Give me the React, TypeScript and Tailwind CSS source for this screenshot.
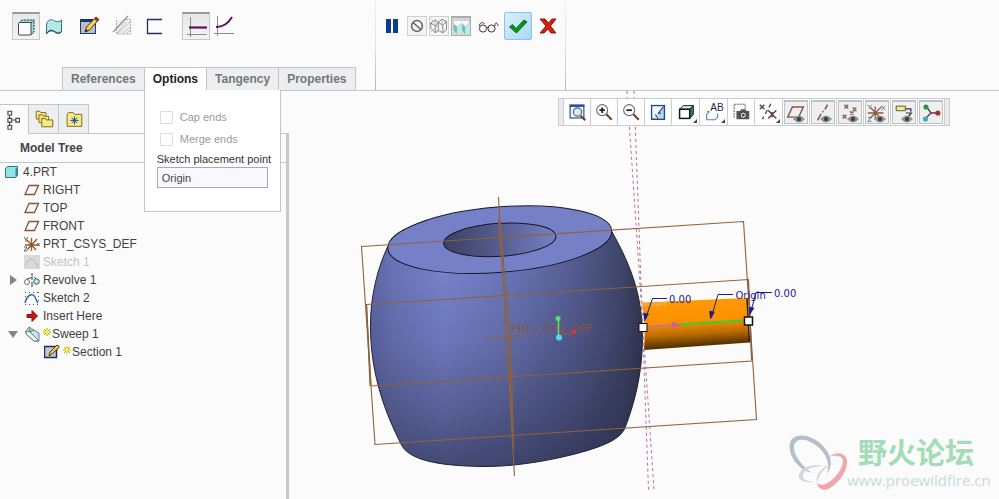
import React, { useState } from "react";

type IconProps = { name: string; size?: number };

// All icons share a 24x24 grid, except the 16x16 tree ones further down
const icons: Record<string, React.ReactNode> = {
  solid: (
    <>
      <path d="M5 8l3-3h12v12l-3 3z" fill="#9fdcd8" />
      <path d="M5 8l3-3h12v12l-3 3M17 8l3-3" fill="none" stroke="#17303a" strokeDasharray="2 1" />
      <rect x="4.500" y="7.500" width="12.500" height="12.500" rx="1" fill="#fdfdfd" stroke="#444" />
    </>
  ),
  surface: (
    <>
      <path d="M4.500 10c2-5 5-5 8-3 3 1 5 1 7-1v12c-3 2-5 2-7 0-3-2-6-1-8 2z" fill="#a9e4e6" stroke="#39747c" />
      <path d="M6 9c2-3 5-2 7 0s4 1 6 0M6 12c2-3 5-2 7 0s4 1 6 0M6 15c2-3 5-2 7 0s4 1 6 0" fill="none" stroke="#f2ffff" strokeDasharray="1 1" />
      <path d="M4.500 19.500c2-3 5-4 8-2 3 2 5 2 7 0" fill="none" stroke="#15303a" />
    </>
  ),
  sketch: (
    <>
      <rect x="2.500" y="5.500" width="15" height="14" fill="#b9bfc4" stroke="#1d3a77" />
      <path d="M2 5h16v3H2z" fill="#153577" />
      <path d="M7 18l1.500-5L18 3l3 2.500L11.500 16z" fill="#f4cd62" stroke="#4b3519" />
      <path d="M18 3l3 2.500-2 2L16 5z" fill="#8f3e1e" />
      <path d="M7 18l1-3 2 2z" fill="#222" />
    </>
  ),
  hatch: (
    <>
      <path d="M6.500 6v14h14V5.500H15" fill="#f0f0f0" stroke="#aaa" strokeDasharray="2 1" />
      <path d="M7 15l8-9M8 19L20 8M13 19l7-6M7 19l9-11M17 19l3-3" stroke="#c5c5c5" />
      <path d="M3 18L18 2" stroke="#999" strokeWidth="1.300" />
    </>
  ),
  thin: <path d="M20 5.500H5.500v14H20" fill="none" stroke="#22315f" strokeWidth="1.300" />,
  constant: (
    <>
      <path d="M6.500 2v20M3 19.500h20" stroke="#8b8b8b" />
      <path d="M5 12.500h18" stroke="#5b1460" strokeWidth="2.200" />
    </>
  ),
  variable: (
    <>
      <path d="M5.500 2v20M2 19.500h20" stroke="#8b8b8b" />
      <path d="M4 13c7 0 12-3 16-10" fill="none" stroke="#5b1460" strokeWidth="2" />
    </>
  ),
  pause: <path d="M5 5h5v14H5zM12 5h5v14h-5z" fill="#0c3c8e" />,
  none: (
    <>
      <circle cx="12" cy="12" r="6.500" fill="none" stroke="#5c636c" strokeWidth="1.800" />
      <path d="M7 7.500l10 9" stroke="#5c636c" strokeWidth="1.800" />
    </>
  ),
  wireframe: (
    <>
      <path d="M1 8l6-4 4 3v11l-4 3-6-6zM1 8l6 4 4-5M7 12v9M11 7l5-4 6 3-5 5-6-4M17 11v10l-6-3M22 6v11l-5 4" fill="none" stroke="#676767" />
      <path d="M7 4v7M16 3v9M1 20l10-9M1 2l4 4" stroke="#aaa" />
    </>
  ),
  attached: (
    <>
      <path d="M2 8l5 4v10l-5-6zM13 7l5 5v10l-5-6z" fill="#73bfc0" />
      <path d="M7 12l6-5v10l-6 5zM18 12l5-5v10l-5 5z" fill="#b9efeb" />
      <path d="M2 8l5 4 6-5 5 5 5-5V3H2z" fill="#fafafa" stroke="#a9bcbc" />
    </>
  ),
  glasses: (
    <>
      <circle cx="7" cy="14.500" r="3.600" fill="#f7f7f7" stroke="#3c3634" />
      <circle cx="15.500" cy="14.500" r="3.600" fill="#f7f7f7" stroke="#3c3634" />
      <path d="M10.500 14q1-1.500 2 0M3.500 12c0-4 4-4 5-2M19 12c0-5 3-3 3 0" fill="none" stroke="#5e2b20" />
    </>
  ),
  accept: <path d="M3.500 13l3-2.500 3.500 4L18 6l3 2L10.500 19z" fill="#0f9117" stroke="#087510" />,
  cancel: <path d="M4 5h5l3.500 4L16 5h4l-5.500 7L20 19h-5l-3-4-4 4H4l6-7z" fill="#c92313" stroke="#911a10" />,
  tree: (
    <path d="M9.500 1.500h4.500v4.500H9.500zM9.500 10h4.500v4.500H9.500zM9.500 18.500h4.500v4.500H9.500zM19 10h4.500v4.500H19zM11.500 6V10M11.500 14.500v4M14 12H19" fill="none" stroke="#444" strokeWidth="1.300" />
  ),
  folders: (
    <g fill="#f6ea83" stroke="#786317">
      <path d="M3.500 5V3.500h4l1 1.500H14v7H3.500z" />
      <path d="M6.500 9V7.500h4l1 1.500H17v7H6.500z" />
      <path d="M9.500 14v-2.500h4l1 1.500h7v7.500h-12z" />
    </g>
  ),
  favorites: (
    <>
      <path d="M4.500 20V6.500L6 5h5l1.500 2h8v13z" fill="#f8ec85" stroke="#786317" />
      <path d="M12.500 9v9M8 13.500h9M9.500 10.500l6 6M15.500 10.500l-6 6" stroke="#123f96" />
    </>
  ),
  refit: (
    <>
      <rect x="4.500" y="4.500" width="15" height="14" fill="#f4f7fb" stroke="#27539a" strokeWidth="1.300" />
      <path d="M4 4h16v2.500H4z" fill="#2a5298" />
      <circle cx="12.500" cy="12" r="4.500" fill="#dcebf2" stroke="#53616b" strokeWidth="1.300" />
      <path d="M16 16l5 5" stroke="#764225" strokeWidth="2.400" />
    </>
  ),
  zoomIn: (
    <>
      <circle cx="10" cy="10" r="6" fill="#fff" stroke="#6b6b6b" strokeWidth="1.200" />
      <path d="M7 10h6M10 7v6" stroke="#222" strokeWidth="2" />
      <path d="M14.500 14.500l6 6" stroke="#764225" strokeWidth="2.400" />
    </>
  ),
  zoomOut: (
    <>
      <circle cx="10" cy="10" r="6" fill="#fff" stroke="#6b6b6b" strokeWidth="1.200" />
      <path d="M7 10h6" stroke="#222" strokeWidth="2" />
      <path d="M14.500 14.500l6 6" stroke="#764225" strokeWidth="2.400" />
    </>
  ),
  repaint: (
    <>
      <rect x="5" y="5" width="14" height="15" fill="#b9d9ef" stroke="#27477a" strokeWidth="1.500" />
      <path d="M6 6h12L9 18H6z" fill="#edf7fc" />
      <path d="M18 6l-6 8M9 15l2 2M13 12l2 2M11 19l1-1" stroke="#24406b" strokeWidth="1.200" />
    </>
  ),
  shading: (
    <>
      <path d="M5 9l4-4h11l-4 4z" fill="#caeae8" stroke="#10191a" />
      <path d="M16 9l4-4v10l-4 4z" fill="#25817f" stroke="#10191a" />
      <rect x="5" y="9" width="11" height="10" fill="#fff" stroke="#10191a" strokeWidth="1.600" />
    </>
  ),
  saved: (
    <>
      <path d="M7 11.500l-3 3v6h9l3-3v-4M4.500 11.500h2" fill="none" stroke="#4f8e98" strokeWidth="1.200" />
      <text x="8" y="11" fontSize="11" fontFamily="Liberation Sans, sans-serif" fill="#1d2b44">AB</text>
    </>
  ),
  camera: (
    <>
      <path d="M4.500 18V3.500h12v5" fill="none" stroke="#444" strokeDasharray="2 1" />
      <path d="M7 11h4l1-2h5l1 2h3v9H7z" fill="#555" />
      <circle cx="14.500" cy="15.500" r="3.500" fill="#ddd" stroke="#222" />
      <circle cx="14.500" cy="15.500" r="1.500" fill="#444" />
    </>
  ),
  datum: (
    <path d="M2 4l5 5M7 4L2 9M14 3l-2 4M10 10l-2 4M6 17l-1 3M11 10l9 9M20 10l-9 9M15.500 12v6M15 3l0 0" fill="none" stroke="#5f4336" strokeWidth="1.500" />
  ),
  planes: <path d="M8 5.500h12l-5 11H3z" fill="none" stroke="#875b43" strokeWidth="1.600" />,
  axes: <path d="M17 3l-3 5M12.500 10l-1 1M10 13l-4 7" stroke="#875b43" strokeWidth="1.700" />,
  points: (
    <path d="M6 3l4 4M10 3L6 7M15 6l4 4M19 6l-4 4M4 14l4 4M8 14l-4 4M12 10l4 4M16 10l-4 4" stroke="#875b43" strokeWidth="1.500" />
  ),
  csys: (
    <>
      <path d="M10 5v14M2 12h17M5 6l11 12M17 5L4 18" stroke="#8c5940" strokeWidth="1.400" />
      <path d="M2 3l2 3 2-3M4 6v2M17 4l4 5M21 4l-4 5M2 17h4l-4 4h4" fill="none" stroke="#777" />
    </>
  ),
  annotation: (
    <>
      <path d="M3.500 4.500h10v5h-10z" fill="#f5ec8a" stroke="#4d4d3b" />
      <path d="M14 7.500h5.500v3M14 12h6l-5 6" fill="none" stroke="#333" strokeWidth="1.300" />
    </>
  ),
  spin: (
    <>
      <path d="M7 5l5 7h8M12 12l-6 6" fill="none" stroke="#444" strokeWidth="1.500" />
      <circle cx="6.500" cy="5.500" r="2.800" fill="#249540" />
      <circle cx="19.500" cy="12" r="2.800" fill="#b52b27" />
      <circle cx="6" cy="18.500" r="2.800" fill="#43a8b4" />
    </>
  ),
};

const Icon = ({ name, size = 24 }: IconProps) => (
  <svg width={size} height={size} viewBox="0 0 24 24" className="shrink-0" aria-hidden="true">
    {icons[name]}
  </svg>
);

const treeIcons: Record<string, React.ReactNode> = {
  part: (
    <>
      <path d="M1.500 4.500l2-2h10v9l-2 2h-10z" fill="#8de5ea" stroke="#35757e" />
      <path d="M11.500 5l2-2v8.500l-2 2z" fill="#438792" />
    </>
  ),
  plane: <path d="M5 3.500h9.500l-4 9H1z" fill="none" stroke="#875238" strokeWidth="1.300" />,
  csys: (
    <>
      <path d="M7.500 2v13M1 9h14M3 4l9 10M13 3L3 14" stroke="#905832" strokeWidth="1.300" />
      <path d="M0 1l2 3 2-3M2 4v2M13 7l3 3M16 7l-3 3M0 11h3l-3 4h3" fill="none" stroke="#62635c" />
    </>
  ),
  sketchHidden: (
    <>
      <path d="M0 1h16v14H0z" fill="#d9dad6" />
      <path d="M1 12C6 1 10 4 14 13" fill="none" stroke="#b6b7b3" />
    </>
  ),
  revolve: (
    <>
      <circle cx="3" cy="10" r="2.500" fill="none" stroke="#5f7376" />
      <circle cx="12.500" cy="9.500" r="2.800" fill="#bce3e4" stroke="#345d63" />
      <path d="M8 1v3M8 6v2M8 10v5" stroke="#333" />
      <path d="M3 7l6-2M10 5l2 2" stroke="#345d63" />
    </>
  ),
  sketch: (
    <>
      <path d="M1 2.500h15M1 14.500h15M1.500 2v12M14.500 2v12" stroke="#555" strokeDasharray="1 3" />
      <path d="M1 13c2-8 8-12 11-4 1 2 1 3 2 4" fill="none" stroke="#2568b9" strokeWidth="1.500" />
    </>
  ),
  insert: <path d="M3 6.500h5v-4l5.500 5.500-5.500 5.500v-4H3z" fill="#cd1414" stroke="#8d1111" />,
  sweep: (
    <>
      <path d="M2 5l3-4 5 3 5 3v8h-5L2 8z" fill="#c9e5e7" stroke="#5a878e" />
      <path d="M2 5l4 1 9 9h-5L2 8z" fill="#f3f4f1" stroke="#61777a" />
      <path d="M5 1l1 5 4-2" fill="#8bd0d5" stroke="#4e8992" />
    </>
  ),
  section: (
    <>
      <path d="M.500 2.500h12v11H.500z" fill="#c5cacc" stroke="#173062" strokeWidth="1.500" />
      <path d="M5 12l1-4 7-7 2.500 2L8 10z" fill="#f0c64a" stroke="#4b3519" />
    </>
  ),
};

type TreeItem = {
  label: string;
  icon: string;
  level: number;
  muted?: boolean;
  open?: boolean;
  isNew?: boolean;
};

const treeItems: TreeItem[] = [
  { label: "4.PRT", icon: "part", level: 0 },
  { label: "RIGHT", icon: "plane", level: 1 },
  { label: "TOP", icon: "plane", level: 1 },
  { label: "FRONT", icon: "plane", level: 1 },
  { label: "PRT_CSYS_DEF", icon: "csys", level: 1 },
  { label: "Sketch 1", icon: "sketchHidden", level: 1, muted: true },
  { label: "Revolve 1", icon: "revolve", level: 1, open: false },
  { label: "Sketch 2", icon: "sketch", level: 1 },
  { label: "Insert Here", icon: "insert", level: 1 },
  { label: "Sweep 1", icon: "sweep", level: 1, open: true, isNew: true },
  { label: "Section 1", icon: "section", level: 2, isNew: true },
];

const indents = ["pl-1", "pl-6", "pl-11"];

const TreeRow = ({ item }: { item: TreeItem }) => (
  <li className={`relative flex h-[18px] items-center gap-[3px] ${indents[item.level]}`}>
    {item.open !== undefined && (
      <button aria-label={`Toggle ${item.label}`} className="absolute left-2 top-1">
        <svg width="10" height="10" viewBox="0 0 10 10">
          <path d={item.open ? "M0 2h10L5 9z" : "M2 0l7 5-7 5z"} fill="#858585" />
        </svg>
      </button>
    )}
    <svg width="16" height="16" viewBox="0 0 16 16" className="shrink-0" aria-hidden="true">
      {treeIcons[item.icon]}
    </svg>
    <span className={`flex items-center gap-px ${item.muted ? "text-[#c4c4c4]" : "text-[#3f3f3f]"}`}>
      {item.isNew && (
        <svg width="8" height="12" viewBox="0 0 8 12" aria-hidden="true">
          <path d="M4 0v8M0 4h8M1 1l6 6M7 1L1 7" stroke="#b9a51e" />
          <path d="M4 2v4M2 4h4" stroke="#fff02c" strokeWidth="2" />
        </svg>
      )}
      {item.label}
    </span>
  </li>
);

const tabs = ["References", "Options", "Tangency", "Properties"];

const OptionsPanel = () => (
  <div className="absolute -left-px top-full z-20 w-[137px] border border-t-0 border-[#c3c6c9] bg-white px-3 pb-[23px] pt-4 text-[11px] font-normal">
    <label className="flex h-[22px] items-center gap-[7px] pl-[3px] text-[#9a9a9a]">
      <input type="checkbox" disabled className="size-[13px] appearance-none border border-[#dedede] bg-white" />
      Cap ends
    </label>
    <label className="flex h-[22px] items-center gap-[7px] pl-[3px] text-[#9a9a9a]">
      <input type="checkbox" disabled className="size-[13px] appearance-none border border-[#dedede] bg-white" />
      Merge ends
    </label>
    <label htmlFor="placement" className="block whitespace-nowrap pt-0.5 leading-[15px] text-[#333]">
      Sketch placement point
    </label>
    <input
      id="placement"
      defaultValue="Origin"
      className="block h-[21px] w-full border border-[#a9abad] bg-[#f9f8fe] px-1 text-[#444] outline-none"
    />
  </div>
);

const ToolButton = ({ name, active, className = "" }: { name: string; active?: boolean; className?: string }) => (
  <button
    aria-label={name}
    className={`flex size-7 shrink-0 items-center justify-center ${
      active ? "border border-t-2 border-[#c6c7c9] border-t-[#999] bg-linear-to-b from-[#e6e7e9] to-[#f4f4f5]" : ""
    } ${className}`}
  >
    <Icon name={name} />
  </button>
);

const Divider = () => <div className="w-px bg-linear-to-b from-[#f0f0f0] via-[#e2e2e2] to-[#b9b9b9]" />;

const Dashboard = () => {
  const [tab, setTab] = useState("Options");
  return (
    <header className="flex h-[91px] border-b border-[#c3c5c7]">
      <div className="flex w-[375px] shrink-0 flex-col justify-between pt-3">
        <div className="flex pl-3">
          <ToolButton name="solid" active />
          <ToolButton name="surface" />
          <ToolButton name="sketch" className="ml-2" />
          <ToolButton name="hatch" className="ml-1" />
          <ToolButton name="thin" className="ml-1" />
          <ToolButton name="constant" active className="ml-[14px]" />
          <ToolButton name="variable" />
        </div>
        <nav className="-mb-px flex pl-[62px] text-[12px] font-bold">
          {tabs.map((t) => (
            <div key={t} className="relative -mr-px border border-[#c3c6c9]">
              <button
                onClick={() => setTab(t)}
                className={`relative block px-2 ${
                  t === tab ? "z-30 -mb-px h-[23px] bg-white pb-px text-[#222]" : "h-[22px] bg-[#eceef0] text-[#74777a]"
                }`}
              >
                {t}
              </button>
              {t === "Options" && tab === t && <OptionsPanel />}
            </div>
          ))}
        </nav>
      </div>
      <Divider />
      <div className="flex w-[189px] shrink-0 items-start justify-between py-3 pl-[5px] pr-[3px]">
        <ToolButton name="pause" className="w-6" />
        <button aria-label="no preview" className="mt-1 flex size-5 items-center justify-center border border-[#d0d0d0] bg-[#f4f4f4]">
          <Icon name="none" size={20} />
        </button>
        <button aria-label="unattached" className="mt-1 flex size-5 items-center justify-center border border-[#d0d0d0] bg-[#f4f4f4]">
          <Icon name="wireframe" size={18} />
        </button>
        <button aria-label="attached" className="mt-1 flex size-5 items-center justify-center border border-t-2 border-[#aaa] bg-[#d9dadb]">
          <Icon name="attached" size={18} />
        </button>
        <ToolButton name="glasses" />
        <ToolButton name="accept" className="rounded-xs border border-[#8ec4ea] bg-linear-to-br from-[#d9f1fd] to-[#a8d9f5]" />
        <ToolButton name="cancel" />
      </div>
      <Divider />
    </header>
  );
};

const ModelTree = () => (
  <aside className="flex w-[289px] shrink-0 flex-col pt-[13px] text-[12px]">
    <div className="flex h-[30px] border-b border-[#c3c6c9]">
      <button aria-label="Model tree" className="-mb-px flex w-7 items-center border-t border-[#c3c6c9] bg-[#fbfbfb]">
        <Icon name="tree" size={20} />
      </button>
      <button aria-label="Folder browser" className="flex w-[31px] items-center justify-center border border-b-0 border-[#c3c6c9] bg-[#eceef0]">
        <Icon name="folders" size={22} />
      </button>
      <button aria-label="Favorites" className="flex w-[30px] items-center justify-center border border-b-0 border-l-0 border-[#c3c6c9] bg-[#eceef0]">
        <Icon name="favorites" size={22} />
      </button>
    </div>
    <div className="flex-1 border-r-3 border-[#c6c8ca]">
      <h2 className="h-[29px] border-b border-[#c3c6c9] pl-5 font-bold leading-7 text-[#444]">Model Tree</h2>
      <ul>
        {treeItems.map((item) => (
          <TreeRow key={item.label} item={item} />
        ))}
      </ul>
    </div>
  </aside>
);

const viewTools = [
  { name: "refit" },
  { name: "zoomIn" },
  { name: "zoomOut" },
  { name: "repaint" },
  { name: "shading", menu: true },
  { name: "saved", menu: true },
  { name: "camera" },
  { name: "datum", menu: true },
  { name: "planes", pressed: true, eye: true },
  { name: "axes", pressed: true, eye: true },
  { name: "points", pressed: true, eye: true },
  { name: "csys", pressed: true, eye: true },
  { name: "annotation", pressed: true, eye: true },
  { name: "spin", pressed: true },
];

const ViewToolbar = () => (
  <div className="absolute left-[269px] top-[7px] flex border border-[#c9ccd0] bg-[#e9ebee]">
    <div className="w-1" />
    {viewTools.map((tool) => (
      <button
        key={tool.name}
        aria-label={tool.name}
        className={`relative flex h-[26px] items-center justify-center border-l border-[#c9ccd0] bg-white p-px ${
          tool.menu ? "w-7" : "w-[27px]"
        }`}
      >
        <span
          className={`flex size-full items-center justify-center ${
            tool.pressed ? "border border-t-2 border-[#bfc2c5] bg-[#edeff1]" : ""
          }`}
        >
          <Icon name={tool.name} size={22} />
        </span>
        {tool.eye && (
          <svg width="12" height="8" viewBox="0 0 12 8" className="absolute bottom-0.5 right-1">
            <path d="M0 4q6-7 12 0-6 7-12 0z" fill="#8f9497" />
            <circle cx="6" cy="4" r="2.200" fill="#3f4346" />
          </svg>
        )}
        {tool.menu && (
          <svg width="4" height="4" viewBox="0 0 4 4" className="absolute bottom-0.5 right-0.5">
            <path d="M4 0v4H0z" fill="#444" />
          </svg>
        )}
      </button>
    ))}
    <div className="w-[5px] border-l border-[#c9ccd0]" />
  </div>
);

const bodyPath =
  "M388 246C378 267 370 296 370.500 328C371 377 386 414 401 444C409 462 446 466 483 466.500C523 467 573 456 598 447C617 440 622 434 625 428C634 404 642 376 642.500 340C643 300 633 269 611.800 231.500Z";

const ModelView = () => (
  <svg
    viewBox="289 91 710 408"
    preserveAspectRatio="xMinYMin meet"
    className="absolute inset-0 size-full"
    fontFamily="DejaVu Sans, sans-serif"
    fontSize="10"
  >
    <defs>
      <linearGradient id="body" gradientUnits="userSpaceOnUse" x1="370" y1="0" x2="643" y2="0">
        <stop offset="0" stopColor="#5a649f" />
        <stop offset="0.080" stopColor="#6871b2" />
        <stop offset="0.270" stopColor="#7681ca" />
        <stop offset="0.520" stopColor="#6973b4" />
        <stop offset="0.750" stopColor="#545c8f" />
        <stop offset="0.930" stopColor="#3e4468" />
        <stop offset="1" stopColor="#30344d" />
      </linearGradient>
      <linearGradient id="shade" gradientUnits="userSpaceOnUse" x1="480" y1="270" x2="496" y2="468">
        <stop offset="0" stopColor="#252840" stopOpacity="0" />
        <stop offset="0.350" stopColor="#252840" stopOpacity="0.120" />
        <stop offset="0.700" stopColor="#252840" stopOpacity="0.380" />
        <stop offset="1" stopColor="#252840" stopOpacity="0.640" />
      </linearGradient>
      <linearGradient id="hole" x1="0" y1="0" x2="1" y2="0">
        <stop offset="0" stopColor="#3b4062" />
        <stop offset="0.450" stopColor="#545b8b" />
        <stop offset="1" stopColor="#7480c2" />
      </linearGradient>
      <linearGradient id="rod" gradientUnits="userSpaceOnUse" x1="695" y1="300" x2="698" y2="347">
        <stop offset="0" stopColor="#ff9804" />
        <stop offset="0.450" stopColor="#fb9100" />
        <stop offset="0.720" stopColor="#b86a00" />
        <stop offset="1" stopColor="#4b2b00" />
      </linearGradient>
    </defs>

    {/* revolved body */}
    <path d={bodyPath} fill="url(#body)" />
    <path d={bodyPath} fill="url(#shade)" stroke="#202337" />
    <ellipse cx="499.800" cy="239.700" rx="112.300" ry="32.700" transform="rotate(-4.600 499.800 239.700)" fill="#7680c6" stroke="#14162b" />
    <ellipse cx="499.800" cy="239.800" rx="56.200" ry="16.500" transform="rotate(-3.800 499.800 239.800)" fill="url(#hole)" stroke="#14162b" />

    {/* swept rod */}
    <path d="M642 302.500L747 298L749.500 342.500L644 350Q646 326 642 302.500Z" fill="url(#rod)" />
    <path d="M747 298L749.500 342.500" stroke="#2c1a05" strokeWidth="1.500" />

    {/* datum planes */}
    <g fill="none" stroke="#8f623d" strokeWidth="1.100">
      <path d="M361.500 246.500L743.500 221.500L756.500 419.500L375 444.500Z" />
      <path d="M366.500 304.500L748.500 279.500L752 361L371 386Z" />
      <path d="M366.500 304L370 386M748 280L751.500 360" />
      <path d="M498.500 197L514.500 476M499.500 220L511 340L513.500 450M498.500 220L508 340L513 440" />
      <path d="M485 338L527 335" />
    </g>
    <g stroke="#b5709a" strokeDasharray="3 3">
      <path d="M627 91L654 490" />
      <path d="M634 91L648.500 490" />
    </g>
    <text x="511" y="332" fontSize="11" fill="#805848">PRT_CSYS_DEF</text>
    <text x="640" y="306" fontSize="7" fill="#d8c47a">Section</text>

    {/* spin centre */}
    <path d="M558.500 318V337" stroke="#59e068" strokeWidth="1.500" />
    <circle cx="558" cy="318.500" r="2.500" fill="#54e463" />
    <path d="M559 333.500H571" stroke="#a2433f" />
    <path d="M570 332l6-3v5z" fill="#e3352f" />
    <circle cx="559" cy="337.500" r="3" fill="#4cdbe8" />

    {/* trajectory */}
    <path d="M680 324.500L746 320.500" stroke="#55c12c" strokeWidth="2.500" />
    <path d="M646 327L674 325" stroke="#cc7195" strokeWidth="2" />
    <path d="M672 321.500L681 324.500L672 328.500Z" fill="#cf6390" />
    <rect x="639" y="323.500" width="8" height="8" fill="#fff" stroke="#111" />
    <rect x="744.500" y="317" width="8" height="8" fill="#fff" stroke="#111" strokeWidth="1.500" />

    {/* dimension leaders */}
    <g fill="none" stroke="#1b1b8e">
      <path d="M667 298.500H652.500L645.500 319" />
      <path d="M733 294.500H718L711.500 317" />
      <path d="M772 292.500H756L750.500 313" />
      <path d="M643.500 313L644.500 321L648.500 314ZM709.500 311L710.500 319L714.500 312ZM749 307L749.500 315L754 308Z" fill="#1b1b8e" strokeWidth="0.500" />
    </g>
    <g fill="#1b1b8e">
      <text x="669" y="303">0.00</text>
      <text x="735.500" y="299">Origin</text>
      <text x="774" y="296.500">0.00</text>
    </g>

    {/* forum watermark */}
    <path
      d="M827 474C834 464 831 453 821 444C811 435 798 433 792 439C787 445 790 458 799 466C803 470 808 472 812 473C802 466 794 456 794 447C794 439 804 437 814 444C825 451 831 462 827 474Z"
      fill="#b3bfcb"
    />
    <path
      d="M829 457C836 451 845 452 847 460C848 470 840 482 830 488C824 492 818 489 817 483C822 487 828 484 835 477C842 469 845 460 841 457C837 455 833 455 829 457Z"
      fill="#f0a6ab"
    />
    <path
      d="M823 466C813 463 800 468 799 475C798 480 804 483 814 482C806 481 802 479 803 475C804 469 814 466 823 466ZM832 464C823 466 815 474 817 483C819 474 824 468 832 464Z"
      fill="#cfd6dc"
    />
    <text x="858" y="464" fontSize="29" fontWeight="bold" fontFamily="Noto Sans CJK SC, sans-serif" fill="#a5dbb8">
      野火论坛
    </text>
    <text x="847" y="486" fontSize="15" fontFamily="Open Sans, sans-serif" fill="#c7dcda">
      www.proewildfire.cn
    </text>
  </svg>
);

export default function App() {
  return (
    <div className="flex min-h-screen flex-col overflow-hidden bg-[#fbfbfb] font-['Liberation_Sans',Arial,sans-serif]">
      <Dashboard />
      <div className="flex flex-1">
        <ModelTree />
        <main className="relative flex-1">
          <ModelView />
          <ViewToolbar />
        </main>
      </div>
    </div>
  );
}
